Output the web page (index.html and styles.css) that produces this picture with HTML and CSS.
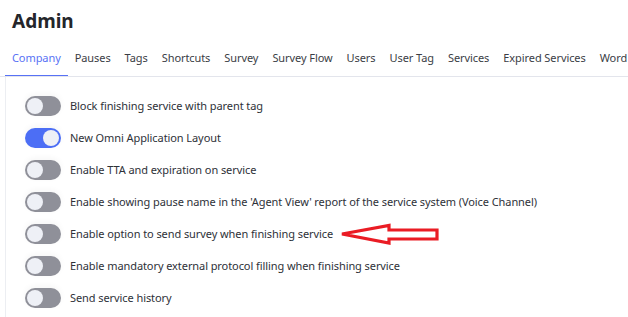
FILE: index.html
```html
<!DOCTYPE html>
<html>
<head>
<meta charset="utf-8">
<link rel="stylesheet" href="styles.css">
</head>
<body>
<header class="header">
  <h1 class="title">Admin</h1>
</header>
<nav class="tabs">
  <a class="tab active">Company</a>
  <a class="tab">Pauses</a>
  <a class="tab">Tags</a>
  <a class="tab">Shortcuts</a>
  <a class="tab">Survey</a>
  <a class="tab">Survey Flow</a>
  <a class="tab">Users</a>
  <a class="tab">User Tag</a>
  <a class="tab">Services</a>
  <a class="tab">Expired Services</a>
  <a class="tab">Word</a>
</nav>
<main class="content">
  <ul class="settings">
    <li class="row"><span class="toggle"></span><span class="label">Block finishing service with parent tag</span></li>
    <li class="row"><span class="toggle on"></span><span class="label">New Omni Application Layout</span></li>
    <li class="row"><span class="toggle"></span><span class="label">Enable TTA and expiration on service</span></li>
    <li class="row"><span class="toggle"></span><span class="label">Enable showing pause name in the 'Agent View' report of the service system (Voice Channel)</span></li>
    <li class="row"><span class="toggle"></span><span class="label">Enable option to send survey when finishing service</span>
      <svg class="arrow" width="104" height="24" viewBox="0 0 104 24"><polygon points="4,12 51,3.5 51,8 99,8 99,17 51,17 51,21 " fill="none" stroke="#ea1c24" stroke-width="3.2" stroke-linejoin="miter"/></svg>
    </li>
    <li class="row"><span class="toggle"></span><span class="label">Enable mandatory external protocol filling when finishing service</span></li>
    <li class="row"><span class="toggle"></span><span class="label">Send service history</span></li>
  </ul>
</main>
</body>
</html>
```
FILE: styles.css
```css
* { box-sizing: border-box; }
html, body { margin: 0; padding: 0; background: #fff; }
body {
  font-family: "Noto Sans", "Open Sans", sans-serif;
  color: #2b2d33;
  width: 628px;
  height: 317px;
  overflow: hidden;
}
.header { padding: 8px 12px 0; }
.title {
  margin: 0;
  font-size: 19px;
  line-height: 26px;
  font-weight: 700;
  color: #24262b;
}
.tabs {
  display: flex;
  gap: 0;
  padding: 16px 0 0 5px;
  border-bottom: 1px solid #e3e5ec;
  white-space: nowrap;
  overflow: hidden;
}
.tab {
  flex: none;
  padding: 0 7px;
  font-size: 11px;
  letter-spacing: -0.08px;
  line-height: 16px;
  height: 27px;
  color: #3a3d45;
  border-bottom: 2px solid transparent;
  margin-bottom: -1px;
}
.tab.active {
  color: #5872f5;
  border-bottom-color: #5872f5;
}
.content {
  margin-left: 5px;
  border-left: 1px solid #eceef2;
  padding-top: 13px;
  height: 240px;
}
.settings { list-style: none; margin: 0; padding: 0 0 0 19px; }
.row {
  display: flex;
  align-items: center;
  gap: 9px;
  height: 32px;
}
.toggle {
  position: relative;
  flex: none;
  width: 36px;
  height: 20px;
  border-radius: 10px;
  background: #8f9099;
  box-shadow: 0 -2px 6px rgba(0,0,0,0.04);
}
.toggle::after {
  content: "";
  position: absolute;
  top: 2px;
  left: 2px;
  width: 16px;
  height: 16px;
  border-radius: 50%;
  background: #eef0f6;
}
.toggle.on { background: #4c6ef5; }
.toggle.on::after { left: 18px; }
.label {
  font-size: 11px;
  letter-spacing: -0.08px;
  line-height: 16px;
  color: #2e3138;
}
.arrow { margin-left: -4px; flex: none; }
```
